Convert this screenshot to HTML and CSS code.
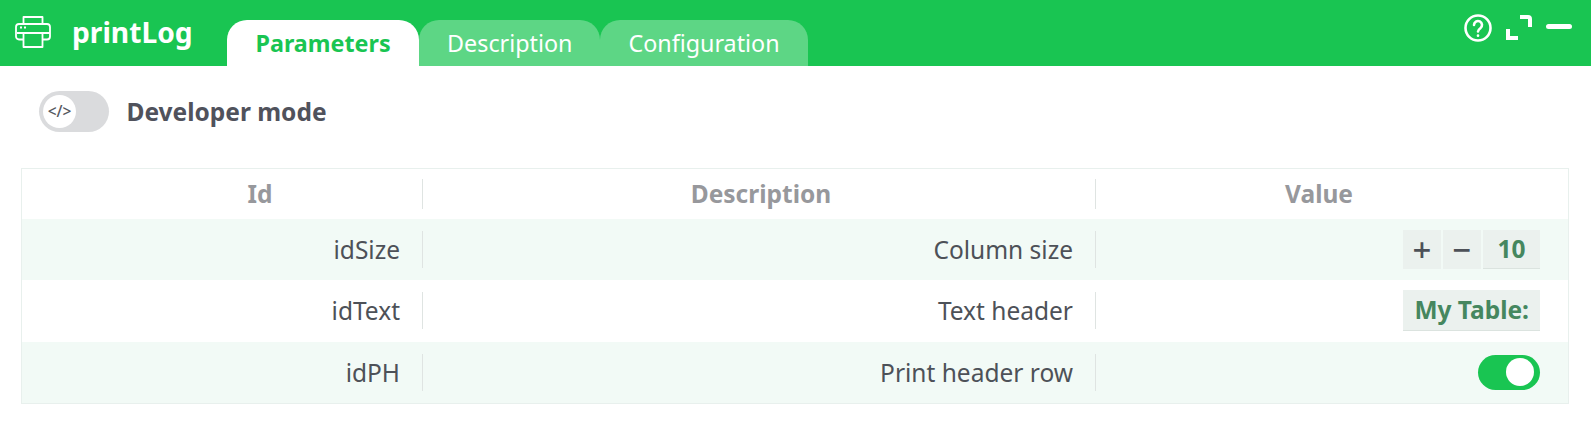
FILE: index.html
```html
<!DOCTYPE html>
<html lang="en">
<head>
  <meta charset="UTF-8" />
  <title>printLog</title>
  <link rel="stylesheet" href="styles.css">
</head>
<body>

  <header class="topbar">
    <svg class="printer" viewBox="0 0 36 32" fill="none" stroke="#fff" stroke-width="1.800" stroke-linejoin="round" aria-hidden="true">
      <path d="M8.500 8V1h19v7" />
      <path d="M8.500 23.500H4A3 3 0 0 1 1 20.500V11a3 3 0 0 1 3-3h28a3 3 0 0 1 3 3v9.500a3 3 0 0 1-3 3h-4.500" />
      <path d="M2 17h33" />
      <path d="M8.500 17v14h19V17" />
      <path d="M5 11.500h2M9 11.500h2" />
    </svg>
    <div class="title">printLog</div>
    <nav class="tabs">
      <a class="tab active" href="#">Parameters</a>
      <a class="tab" href="#">Description</a>
      <a class="tab" href="#">Configuration</a>
    </nav>
    <div class="actions">
      <svg class="help" viewBox="0 0 28 28" fill="none" stroke="#fff" stroke-width="2.600" stroke-linecap="round" aria-hidden="true">
        <circle cx="14" cy="14" r="12.500" />
        <path d="M10 11a4 4 0 1 1 6.400 3.200c-1.400 1-2.400 1.700-2.400 3.300" />
        <path d="M14 21.500v.3" />
      </svg>
      <svg class="expand" viewBox="0 0 26 25" fill="none" stroke="#fff" stroke-width="4" aria-hidden="true">
        <path d="M14 2h8a2 2 0 0 1 2 2v8" />
        <path d="M2 14v9h10" />
      </svg>
      <span class="minimize"></span>
    </div>
  </header>

  <div class="devmode">
    <div class="devswitch"><span class="knob">&lt;/&gt;</span></div>
    <span class="devlabel">Developer mode</span>
  </div>

  <table class="params">
    <thead>
      <tr>
        <th class="col-id"><span>Id</span></th>
        <th class="col-desc"><span>Description</span></th>
        <th class="col-value"><span>Value</span></th>
      </tr>
    </thead>
    <tbody>
      <tr>
        <td><span>idSize</span></td>
        <td><span>Column size</span></td>
        <td>
          <div class="value">
            <span class="stepper">+</span>
            <span class="stepper">−</span>
            <span class="field num">10</span>
          </div>
        </td>
      </tr>
      <tr>
        <td><span>idText</span></td>
        <td><span>Text header</span></td>
        <td>
          <div class="value"><span class="field">My Table:</span></div>
        </td>
      </tr>
      <tr>
        <td><span>idPH</span></td>
        <td><span>Print header row</span></td>
        <td>
          <div class="value"><span class="toggle"></span></div>
        </td>
      </tr>
    </tbody>
  </table>

</body>
</html>
```

FILE: styles.css
```css
* {
  margin: 0;
  padding: 0;
  box-sizing: border-box;
}

body {
  font-family: 'Noto Sans', sans-serif;
  color: #4d5158;
  background: #fff;
  overflow: hidden;
}

.topbar {
  height: 66px;
  background: #19c552;
  display: flex;
  align-items: flex-start;
  padding-left: 15px;
}

.printer {
  width: 36px;
  height: 32px;
  margin-top: 16px;
}

.title {
  color: #fff;
  font-size: 28.200px;
  font-weight: 700;
  line-height: 36px;
  margin: 14px 0 0 21px;
  width: 155px;
}

.tabs {
  display: flex;
  align-self: flex-end;
  height: 46px;
}

.tab {
  display: block;
  height: 46px;
  line-height: 46px;
  padding: 0 28px;
  border-radius: 20px 20px 0 0;
  background: #5dd685;
  color: #fff;
  font-size: 23.300px;
  text-decoration: none;
}

.tab.active {
  background: #fff;
  color: #19c552;
  font-weight: 700;
  padding: 0 28.500px;
}

.actions {
  margin-left: auto;
  display: flex;
  align-items: flex-start;
  padding: 14px 19px 0 0;
}

.help {
  width: 28px;
  height: 28px;
}

.expand {
  width: 26px;
  height: 25px;
  margin: 1px 0 0 14px;
}

.minimize {
  width: 26px;
  height: 5px;
  margin: 10px 0 0 14px;
  background: #fff;
  border-radius: 3px;
}

.devmode {
  display: flex;
  align-items: center;
  padding: 0 0 12px 39px;
  height: 102px;
}

.devswitch {
  width: 70px;
  height: 41px;
  border-radius: 21px;
  background: #dadbdd;
  padding: 4px;
}

.knob {
  display: block;
  width: 33px;
  height: 33px;
  border-radius: 50%;
  background: #fff;
  font-size: 15.500px;
  font-weight: 500;
  line-height: 32px;
  text-align: center;
  color: #55585f;
}

.devlabel {
  margin-left: 17.500px;
  font-size: 24.500px;
  font-weight: 700;
  color: #50525c;
}

.params {
  width: 1548px;
  margin-left: 21px;
  border: 1px solid #e8f0ed;
  border-collapse: separate;
  border-spacing: 0;
  table-layout: fixed;
}

.col-id {
  width: 401px;
}

.col-desc {
  width: 673px;
}

.params th {
  height: 50px;
  font-size: 24.500px;
  font-weight: 700;
  color: #97989c;
  text-align: center;
}

.params td {
  height: 61.330px;
  font-size: 24.500px;
  text-align: right;
}

.params tbody tr:nth-child(odd) {
  background: #f2faf6;
}

.params th span,
.params td > span {
  display: block;
  border-right: 1px solid #dfe4e2;
  line-height: 36px;
}

.params th span {
  line-height: 30px;
}

.col-id span {
  padding-left: 76px;
}

.col-desc span {
  padding-left: 4px;
}

.col-value span {
  padding-right: 26px;
}

.params td > span {
  padding: 1px 22px 0 0;
}

.params .col-value span {
  border-right: none;
}

.value {
  display: flex;
  justify-content: flex-end;
  align-items: center;
  gap: 2px;
  padding-right: 28px;
}

.stepper {
  width: 38px;
  height: 39px;
  background: #ebf1ee;
  font-size: 33px;
  font-weight: 500;
  line-height: 39px;
  text-align: center;
  color: #4d5158;
}

.field {
  height: 41px;
  line-height: 40px;
  padding: 0 11px;
  background: #ebf1ee;
  border-bottom: 1px solid #dbe3df;
  color: #45875f;
  font-weight: 700;
}

.field.num {
  width: 57px;
  height: 39px;
  line-height: 38px;
  text-align: center;
}

.toggle {
  width: 62px;
  height: 35px;
  border-radius: 18px;
  background: #19c552;
  display: flex;
  justify-content: flex-end;
  padding: 3px 6px;
}

.toggle::after {
  content: "";
  width: 28px;
  height: 28px;
  border-radius: 50%;
  background: #fff;
}
```
